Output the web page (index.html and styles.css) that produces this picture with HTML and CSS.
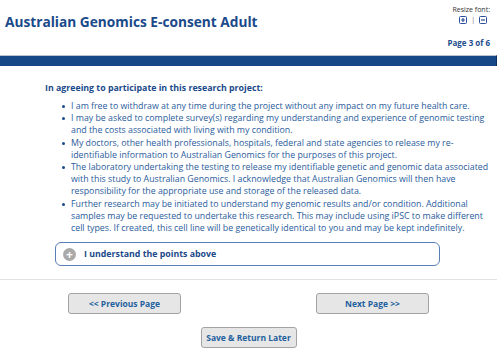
FILE: index.html
```html
<!DOCTYPE html>
<html>
	<head>
		<meta charset="UTF-8">
		<title>Australian Genomics E-consent Adult</title>
		<link rel="stylesheet" href="styles.css">
	</head>
	<body>
		<div class="header">
			<h1 class="title">Australian Genomics E-consent Adult</h1>
			<div class="resize">
				<div class="resize_label">Resize font:</div>
				<div class="resize_btns">
					<svg width="8" height="8" viewBox="0 0 8 8"><rect x="0.5" y="0.5" width="7" height="7" rx="1" fill="#fff" stroke="#2b4f9a"/><path d="M2 4h4M4 2v4" stroke="#2b4f9a" stroke-width="1.2"/></svg>
					<span class="sep">|</span>
					<svg width="8" height="8" viewBox="0 0 8 8"><rect x="0.5" y="0.5" width="7" height="7" rx="1" fill="#fff" stroke="#2b4f9a"/><path d="M2 4h4" stroke="#2b4f9a" stroke-width="1.2"/></svg>
				</div>
			</div>
		</div>
		<div class="page_no">Page 3 of 6</div>
		<div class="bar"></div>

		<div class="content">
			<p class="lead">In agreeing to participate in this research project:</p>
			<ul class="points">
				<li>I am free to withdraw at any time during the project without any impact on my future health care.</li>
				<li>I may be asked to complete survey(s) regarding my understanding and experience of genomic testing and the costs associated with living with my condition.</li>
				<li>My doctors, other health professionals, hospitals, federal and state agencies to release my re-identifiable information to Australian Genomics for the purposes of this project.</li>
				<li>The laboratory undertaking the testing to release my identifiable genetic and genomic data associated with this study to Australian Genomics. I acknowledge that Australian Genomics will then have responsibility for the appropriate use and storage of the released data.</li>
				<li>Further research may be initiated to understand my genomic results and/or condition. Additional samples may be requested to undertake this research. This may include using iPSC to make different cell types. If created, this cell line will be genetically identical to you and may be kept indefinitely.</li>
			</ul>
			<div class="agree">
				<span class="agree_icon">+</span>
				<span class="agree_text">I understand the points above</span>
			</div>
		</div>

		<div class="nav">
			<div class="nav_row">
				<a href="#" class="btn btn_wide">&lt;&lt; Previous Page</a>
				<a href="#" class="btn btn_wide">Next Page &gt;&gt;</a>
			</div>
			<div class="nav_row">
				<a href="#" class="btn btn_save">Save &amp; Return Later</a>
			</div>
		</div>
	</body>
</html>
```
FILE: styles.css
```css
* {
	margin: 0;
	padding: 0;
}
body {
	width: 497px;
	font-family: "Open Sans", "Noto Sans", sans-serif;
	color: #1d4d8b;
	background: #fff;
}

.header {
	display: flex;
	justify-content: space-between;
	align-items: flex-start;
	padding: 5px 7px 0 5px;
	height: 32px;
}
.title {
	font-size: 13.7px;
	font-weight: bold;
	color: #1a4a8a;
	margin-top: 7px;
}
.resize {
	text-align: right;
	color: #333;
	font-size: 7px;
	line-height: 9px;
}
.resize_btns {
	display: flex;
	justify-content: flex-end;
	align-items: center;
	gap: 4px;
	margin-top: 1px;
	padding-right: 3px;
}
.resize_btns svg {
	display: block;
}
.sep {
	color: #666;
	font-size: 7px;
}

.page_no {
	text-align: right;
	font-size: 8px;
	font-weight: bold;
	padding-right: 7px;
	line-height: 12px;
	color: #1d4d8b;
}
.bar {
	margin-top: 6px;
	height: 10px;
	background: #164888;
	border-top: 1px solid #b9c3d0;
	border-right: 1px solid #0c2f5e;
}

.content {
	padding: 16px 6px 0 45px;
}
.lead {
	font-size: 8.8px;
	font-weight: bold;
	line-height: 12px;
	color: #1a4a8a;
}
.points {
	list-style: none;
	margin-top: 6px;
	padding-left: 26px;
}
.points li {
	position: relative;
	font-size: 8.8px;
	line-height: 12.2px;
	color: #2a5c9c;
}
.points li::before {
	content: "";
	position: absolute;
	left: -9px;
	top: 5px;
	width: 3px;
	height: 3px;
	border-radius: 50%;
	background: #1a4a8a;
}

.agree {
	display: flex;
	align-items: center;
	gap: 8px;
	width: 385px;
	height: 24px;
	margin: 8px 0 0 10px;
	padding-left: 7px;
	box-sizing: border-box;
	border: 1px solid #5a7fb5;
	border-radius: 6px;
}
.agree_icon {
	width: 13px;
	height: 13px;
	border-radius: 50%;
	background: #a9a9a9;
	color: #fff;
	font-size: 12px;
	font-weight: bold;
	line-height: 13px;
	text-align: center;
}
.agree_text {
	font-size: 8.8px;
	font-weight: bold;
	color: #1a4a8a;
}

.nav {
	margin-top: 13px;
	border-top: 1px solid #e2e2e2;
	padding-top: 13px;
}
.nav_row {
	display: flex;
	justify-content: center;
	gap: 135px;
	margin-bottom: 13px;
}
.btn {
	display: block;
	height: 21px;
	box-sizing: border-box;
	line-height: 19px;
	font-size: 8.5px;
	font-weight: bold;
	color: #1e5f9e;
	text-decoration: none;
	text-align: center;
	white-space: nowrap;
	background: #e6e6e6;
	border: 1px solid #a3a3a3;
	border-radius: 3px;
}
.btn_wide {
	width: 113px;
}
.btn_save {
	width: 96px;
}
```
